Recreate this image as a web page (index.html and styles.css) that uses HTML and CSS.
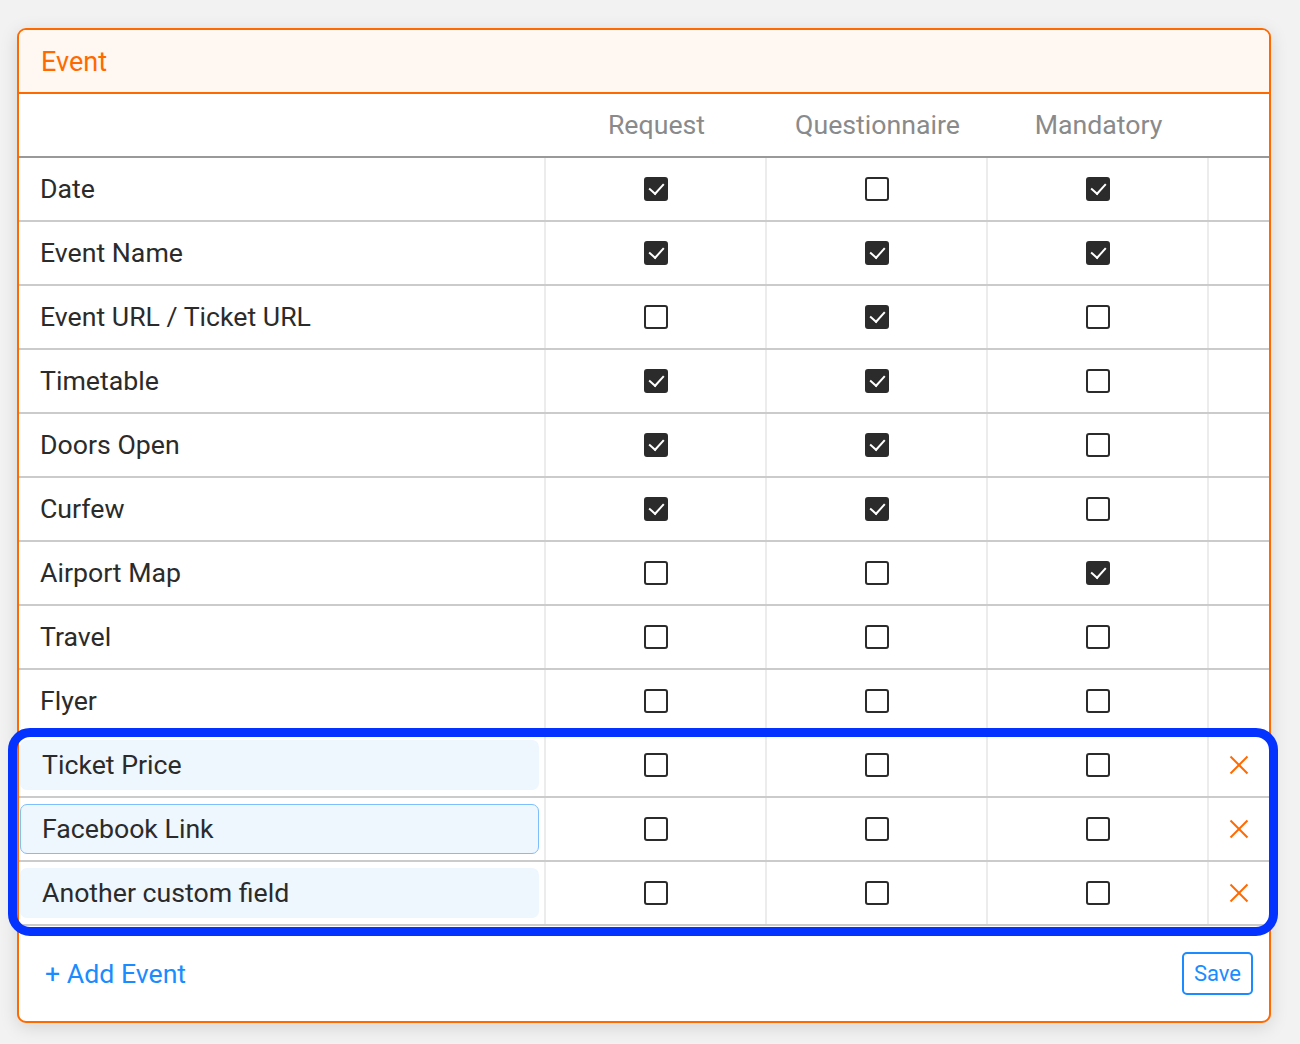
FILE: index.html
```html
<!DOCTYPE html>
<html lang="en">
<head>
    <meta charset="UTF-8">
    <meta name="viewport" content="width=device-width, initial-scale=1.0">
    <title>Event fields</title>
    <link rel="stylesheet" href="styles.css">
</head>
<body>
    <div class="card">
        <div class="card-title">Event</div>

        <div class="cols">
            <div></div>
            <div class="col-name">Request</div>
            <div class="col-name">Questionnaire</div>
            <div class="col-name">Mandatory</div>
            <div></div>
        </div>

        <div class="row">
            <div class="cell label">Date</div>
            <div class="cell"><span class="box on"></span></div>
            <div class="cell"><span class="box"></span></div>
            <div class="cell"><span class="box on"></span></div>
            <div class="cell last"></div>
        </div>
        <div class="row">
            <div class="cell label">Event Name</div>
            <div class="cell"><span class="box on"></span></div>
            <div class="cell"><span class="box on"></span></div>
            <div class="cell"><span class="box on"></span></div>
            <div class="cell last"></div>
        </div>
        <div class="row">
            <div class="cell label">Event URL / Ticket URL</div>
            <div class="cell"><span class="box"></span></div>
            <div class="cell"><span class="box on"></span></div>
            <div class="cell"><span class="box"></span></div>
            <div class="cell last"></div>
        </div>
        <div class="row">
            <div class="cell label">Timetable</div>
            <div class="cell"><span class="box on"></span></div>
            <div class="cell"><span class="box on"></span></div>
            <div class="cell"><span class="box"></span></div>
            <div class="cell last"></div>
        </div>
        <div class="row">
            <div class="cell label">Doors Open</div>
            <div class="cell"><span class="box on"></span></div>
            <div class="cell"><span class="box on"></span></div>
            <div class="cell"><span class="box"></span></div>
            <div class="cell last"></div>
        </div>
        <div class="row">
            <div class="cell label">Curfew</div>
            <div class="cell"><span class="box on"></span></div>
            <div class="cell"><span class="box on"></span></div>
            <div class="cell"><span class="box"></span></div>
            <div class="cell last"></div>
        </div>
        <div class="row">
            <div class="cell label">Airport Map</div>
            <div class="cell"><span class="box"></span></div>
            <div class="cell"><span class="box"></span></div>
            <div class="cell"><span class="box on"></span></div>
            <div class="cell last"></div>
        </div>
        <div class="row">
            <div class="cell label">Travel</div>
            <div class="cell"><span class="box"></span></div>
            <div class="cell"><span class="box"></span></div>
            <div class="cell"><span class="box"></span></div>
            <div class="cell last"></div>
        </div>
        <div class="row">
            <div class="cell label">Flyer</div>
            <div class="cell"><span class="box"></span></div>
            <div class="cell"><span class="box"></span></div>
            <div class="cell"><span class="box"></span></div>
            <div class="cell last"></div>
        </div>

        <div class="custom">
            <div class="row">
                <div class="cell field"><input type="text" value="Ticket Price"></div>
                <div class="cell"><span class="box"></span></div>
                <div class="cell"><span class="box"></span></div>
                <div class="cell"><span class="box"></span></div>
                <div class="cell last"><span class="remove"></span></div>
            </div>
            <div class="row">
                <div class="cell field"><input type="text" class="focus" value="Facebook Link"></div>
                <div class="cell"><span class="box"></span></div>
                <div class="cell"><span class="box"></span></div>
                <div class="cell"><span class="box"></span></div>
                <div class="cell last"><span class="remove"></span></div>
            </div>
            <div class="row">
                <div class="cell field"><input type="text" value="Another custom field"></div>
                <div class="cell"><span class="box"></span></div>
                <div class="cell"><span class="box"></span></div>
                <div class="cell"><span class="box"></span></div>
                <div class="cell last"><span class="remove"></span></div>
            </div>
            <div class="highlight"></div>
        </div>

        <div class="card-foot">
            <a class="add" href="#">+ Add Event</a>
            <button class="save">Save</button>
        </div>
    </div>
</body>
</html>
```

FILE: styles.css
```css
body, html {
    margin: 0;
    padding: 0;
}
body {
    background: #f2f2f2;
    font-family: Roboto, "Noto Sans", sans-serif;
    color: #2b2b2b;
    padding: 28px 29px 21px 17px;
}
.card {
    background: #fff;
    border: 2px solid #ff6a00;
    border-radius: 9px;
    box-shadow: 0 4px 18px rgba(0, 0, 0, 0.13);
}
.card-title {
    height: 62px;
    line-height: 64px;
    padding-left: 22px;
    background: #fff7f1;
    border-bottom: 2px solid #ff6a00;
    border-radius: 7px 7px 0 0;
    color: #ff6a00;
    font-size: 27px;
}
.cols, .row {
    display: grid;
    grid-template-columns: 527px 221px 221px 221px 1fr;
}
.cols {
    height: 62px;
    border-bottom: 2px solid #999;
    align-items: center;
}
.col-name {
    text-align: center;
    color: #8a8a8a;
    font-size: 26.7px;
}
.row {
    height: 62px;
    border-bottom: 2px solid #cbcbcb;
}
.cell {
    display: flex;
    align-items: center;
    justify-content: center;
    border-right: 2px solid #ececec;
}
.cell.last {
    border-right: none;
}
.cell.label {
    justify-content: flex-start;
    padding-left: 21px;
    font-size: 26.7px;
}
.cell.field {
    justify-content: flex-start;
    padding: 0 5px 0 1px;
}
.field input {
    width: 100%;
    height: 50px;
    box-sizing: border-box;
    border: 1.5px solid transparent;
    border-radius: 7px;
    background: #eef6fe;
    padding: 0 0 0 21px;
    font-family: Roboto, "Noto Sans", sans-serif;
    font-size: 26.7px;
    color: #2b2b2b;
    outline: none;
}
.field input.focus {
    border-color: #7dbefc;
}
.box {
    width: 20px;
    height: 20px;
    border: 2px solid #2b2b2b;
    border-radius: 3px;
    position: relative;
}
.box.on {
    background: #2b2b2b;
}
.box.on::after {
    content: "";
    position: absolute;
    left: 6px;
    top: 1px;
    width: 7px;
    height: 12px;
    border: solid #fff;
    border-width: 0 2px 2px 0;
    transform: rotate(42deg);
}
.remove {
    width: 20px;
    height: 20px;
    position: relative;
}
.remove::before, .remove::after {
    content: "";
    position: absolute;
    left: -2px;
    top: 9px;
    width: 24px;
    height: 2px;
    background: #ff6a00;
    transform: rotate(45deg);
}
.remove::after {
    transform: rotate(-45deg);
}
.custom {
    position: relative;
}
.highlight {
    position: absolute;
    left: -11px;
    right: -9px;
    top: -6px;
    bottom: -10px;
    border: 9px solid #0433ff;
    border-radius: 22px;
    pointer-events: none;
}
.card-foot {
    height: 95px;
    display: flex;
    align-items: center;
    justify-content: space-between;
    padding: 0 16px 0 26px;
}
.add {
    color: #1a8cff;
    font-size: 26.7px;
    text-decoration: none;
}
.save {
    height: 43px;
    padding: 0 10px;
    border: 2px solid #1a8cff;
    border-radius: 5px;
    background: #fff;
    color: #1a8cff;
    font-family: Roboto, "Noto Sans", sans-serif;
    font-size: 22px;
}
```
